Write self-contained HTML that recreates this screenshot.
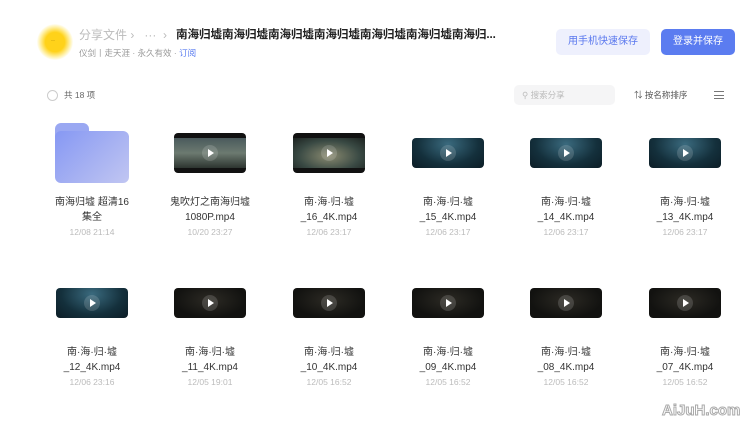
<!DOCTYPE html>
<html><head><meta charset="utf-8"><style>
*{margin:0;padding:0;box-sizing:border-box}
body{width:750px;height:425px;background:#fff;font-family:"Liberation Sans","Noto Sans CJK SC",sans-serif;position:relative;overflow:hidden;color:#333}
.a{position:absolute}
.it{position:absolute;width:110px;text-align:center;font-size:10px;color:#333;line-height:15px}
.it .d{color:#bbb;font-size:8.5px}
.th{position:absolute;border-radius:4px;overflow:hidden}
.th .p{position:absolute;left:50%;top:50%;width:16px;height:16px;margin:-8px 0 0 -8px;border-radius:50%;background:rgba(255,255,255,.15)}
.th .p:after{content:"";position:absolute;left:6px;top:4px;border-left:6px solid #fff;border-top:4px solid transparent;border-bottom:4px solid transparent}
.blue{background:radial-gradient(ellipse at 50% 20%,#3a6a7e,#14303c 60%,#0c1d26)}
.dark{background:radial-gradient(ellipse at 50% 40%,#2c2a24,#121210 70%)}
.land{background:linear-gradient(180deg,#4a5a5c,#6c7a70 50%,#2d3530)}
.land2{background:radial-gradient(ellipse at 50% 60%,#8a8a70,#3a4a44 60%,#1c2220)}
</style></head><body>
<div class="a" style="left:37px;top:24px;width:36px;height:36px;border-radius:50%;background:radial-gradient(circle,#ffd21a 0,#ffd21a 38%,#fff2b0 60%,#fff 72%)"></div>
<div class="a" style="left:51px;top:38px;font-size:6px;color:#8a6a00">··</div>
<div class="a" style="left:79px;top:26px;font-size:12px;color:#bbb">分享文件 ›&nbsp;&nbsp;&nbsp;··· &nbsp;›</div>
<div class="a" style="left:176px;top:26px;font-size:11.6px;font-weight:bold;color:#222;letter-spacing:-0.1px">南海归墟南海归墟南海归墟南海归墟南海归墟南海归墟南海归...</div>
<div class="a" style="left:79px;top:47px;font-size:8.5px;color:#999">仪剑丨走天涯 · 永久有效 · <span style="color:#5a7cf0">订阅</span></div>
<div class="a" style="left:556px;top:29px;width:94px;height:26px;border-radius:5px;background:#eef0fd;color:#5a78ee;font-size:10px;text-align:center;line-height:26px">用手机快速保存</div>
<div class="a" style="left:661px;top:29px;width:74px;height:26px;border-radius:5px;background:#5b7cf0;color:#fff;font-size:10px;text-align:center;line-height:26px">登录并保存</div>
<div class="a" style="left:47px;top:90px;width:11px;height:11px;border:1px solid #ccc;border-radius:50%"></div>
<div class="a" style="left:64px;top:89px;font-size:8.5px;color:#666">共 18 项</div>
<div class="a" style="left:514px;top:85px;width:101px;height:20px;border-radius:5px;background:#f5f5f6;font-size:8.5px;color:#bbb;line-height:20px;padding-left:8px">⚲ 搜索分享</div>
<div class="a" style="left:634px;top:89px;font-size:8.5px;color:#555">⇅ 按名称排序</div>
<div class="a" style="left:714px;top:91px;width:10px;height:8px;border-top:1px solid #777;border-bottom:1px solid #777"></div>
<div class="a" style="left:714px;top:95px;width:10px;height:1px;background:#777"></div>

<div class="a" style="left:55px;top:123px;width:74px;height:60px">
<div class="a" style="left:0;top:0;width:34px;height:14px;border-radius:6px 6px 0 0;background:#9aa8f2"></div>
<div class="a" style="left:0;top:8px;width:74px;height:52px;border-radius:6px;background:linear-gradient(135deg,#8698f3,#c1c6f2)"></div>
</div>

<div class="th land" style="left:174px;top:133px;width:72px;height:40px;border-top:5px solid #111;border-bottom:5px solid #111"><div class="p"></div></div>
<div class="th land2" style="left:293px;top:133px;width:72px;height:40px;border-top:5px solid #111;border-bottom:5px solid #111"><div class="p"></div></div>
<div class="th blue" style="left:412px;top:138px;width:72px;height:30px"><div class="p"></div></div>
<div class="th blue" style="left:530px;top:138px;width:72px;height:30px"><div class="p"></div></div>
<div class="th blue" style="left:649px;top:138px;width:72px;height:30px"><div class="p"></div></div>

<div class="th blue" style="left:56px;top:288px;width:72px;height:30px"><div class="p"></div></div>
<div class="th dark" style="left:174px;top:288px;width:72px;height:30px"><div class="p"></div></div>
<div class="th dark" style="left:293px;top:288px;width:72px;height:30px"><div class="p"></div></div>
<div class="th dark" style="left:412px;top:288px;width:72px;height:30px"><div class="p"></div></div>
<div class="th dark" style="left:530px;top:288px;width:72px;height:30px"><div class="p"></div></div>
<div class="th dark" style="left:649px;top:288px;width:72px;height:30px"><div class="p"></div></div>

<div class="it" style="left:37px;top:195px">南海归墟 超清16<br>集全<br><span class="d">12/08 21:14</span></div>
<div class="it" style="left:155px;top:195px">鬼吹灯之南海归墟<br>1080P.mp4<br><span class="d">10/20 23:27</span></div>
<div class="it" style="left:274px;top:195px">南·海·归·墟<br>_16_4K.mp4<br><span class="d">12/06 23:17</span></div>
<div class="it" style="left:393px;top:195px">南·海·归·墟<br>_15_4K.mp4<br><span class="d">12/06 23:17</span></div>
<div class="it" style="left:511px;top:195px">南·海·归·墟<br>_14_4K.mp4<br><span class="d">12/06 23:17</span></div>
<div class="it" style="left:630px;top:195px">南·海·归·墟<br>_13_4K.mp4<br><span class="d">12/06 23:17</span></div>

<div class="it" style="left:37px;top:345px">南·海·归·墟<br>_12_4K.mp4<br><span class="d">12/06 23:16</span></div>
<div class="it" style="left:155px;top:345px">南·海·归·墟<br>_11_4K.mp4<br><span class="d">12/05 19:01</span></div>
<div class="it" style="left:274px;top:345px">南·海·归·墟<br>_10_4K.mp4<br><span class="d">12/05 16:52</span></div>
<div class="it" style="left:393px;top:345px">南·海·归·墟<br>_09_4K.mp4<br><span class="d">12/05 16:52</span></div>
<div class="it" style="left:511px;top:345px">南·海·归·墟<br>_08_4K.mp4<br><span class="d">12/05 16:52</span></div>
<div class="it" style="left:630px;top:345px">南·海·归·墟<br>_07_4K.mp4<br><span class="d">12/05 16:52</span></div>

<div class="a" style="left:662px;top:402px;font-size:15px;font-weight:bold;color:#fff;-webkit-text-stroke:1px #aaa">AiJuH.com</div>
</body></html>
